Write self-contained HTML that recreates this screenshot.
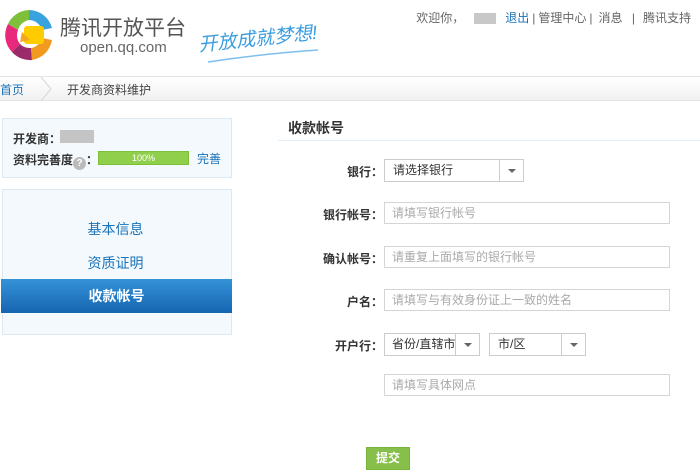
<!DOCTYPE html>
<html><head><meta charset="utf-8"><style>
*{margin:0;padding:0;box-sizing:border-box}
body{width:700px;height:475px;background:#fff;font-family:"Liberation Sans","Noto Sans CJK SC",sans-serif;font-size:12px;color:#333;position:relative;overflow:hidden}
.a{position:absolute}
.top{right:6px;top:9px;color:#666;font-size:12px;white-space:nowrap}
.top span{margin:0 3px}
.crumb{left:0;top:76px;width:700px;height:25px;background:linear-gradient(#fff,#f1f1f1);border-top:1px solid #e4e4e4;border-bottom:1px solid #e6e6e6}
.box{background:#f3f9fd;border:1px solid #dce9f3}
.lbl{width:100px;text-align:right;font-weight:bold;color:#333}
.inp{border:1px solid #d5d5d5;background:#fff;height:22px;color:#aaa;padding-left:7px;line-height:20px}
.sel{border:1px solid #ccc;background:#fff;height:23px;line-height:21px;padding-left:8px;color:#333}
.arr{position:absolute;right:0;top:0;width:24px;height:21px;border-left:1px solid #ccc}
.arr:after{content:"";position:absolute;left:8px;top:9px;border:4px solid transparent;border-top:4px solid #666}
.menu{left:0;width:231px;text-align:center;color:#1a73b8;font-size:14px}
</style></head><body>
<svg class="a" style="left:2px;top:6px" width="54" height="62" viewBox="0 0 54 62">
<path d="M27 4 A24 24 0 0 1 50 22 L40 24 A14 14 0 0 0 27 14Z" fill="#39a3e0"/>
<path d="M27 4 A24 24 0 0 0 6 18 L16 24 A14 14 0 0 1 27 14Z" fill="#7fc03a"/>
<path d="M6 18 A24 24 0 0 0 10 46 L18 38 A14 14 0 0 1 16 24Z" fill="#e8287a"/>
<path d="M10 46 A24 24 0 0 0 30 54 L29 42 A14 14 0 0 1 18 38Z" fill="#9b2a6a"/>
<path d="M30 54 A24 24 0 0 0 50 34 L40 32 A14 14 0 0 1 29 42Z" fill="#f29a1f"/>
<rect x="22" y="20" width="20" height="18" rx="3" fill="#ffcc00"/>
<path d="M20 26 L18 36 L28 34Z" fill="#f5a623"/>
</svg>
<div class="a" style="left:60px;top:17px;font-size:21px;line-height:24px;color:#555;letter-spacing:0px">腾讯开放平台</div>
<div class="a" style="left:80px;top:40px;font-size:15px;line-height:16px;color:#666">open.qq.com</div>
<div class="a" style="left:198px;top:24px;font-size:19px;color:#3b9de0;font-style:italic;transform:rotate(-6deg)">开放成就梦想!</div>
<svg class="a" style="left:200px;top:48px" width="120" height="16"><path d="M8 14 Q60 6 118 2" stroke="#7dbfee" stroke-width="1.5" fill="none"/></svg>
<div class="a top">欢迎你，<span style="display:inline-block;width:22px;height:11px;background:#c8c8c8;vertical-align:middle;margin:0 6px 0 10px"></span><span style="color:#1a73b8">退出</span>|<span>管理中心</span>|<span style="margin:0 6px">消息</span> |<span style="margin-left:8px">腾讯支持</span></div>
<div class="a crumb"></div>
<div class="a" style="left:0;top:81px;color:#1a73b8">首页</div>
<svg class="a" style="left:40px;top:77px" width="14" height="24"><path d="M1 0 L11 12 L1 24" stroke="#d5d5d5" fill="none"/></svg>
<div class="a" style="left:67px;top:81px;color:#444">开发商资料维护</div>

<div class="a box" style="left:2px;top:118px;width:230px;height:60px"></div>
<div class="a" style="left:13px;top:130px;font-weight:bold">开发商：</div>
<div class="a" style="left:60px;top:130px;width:34px;height:13px;background:#c4c4c4"></div>
<div class="a" style="left:13px;top:151px;font-weight:bold">资料完善度<span style="display:inline-block;width:13px;height:13px;border-radius:50%;background:#bbb;color:#fff;font-size:10px;text-align:center;line-height:13px;vertical-align:-2px">?</span>：</div>
<div class="a" style="left:98px;top:151px;width:91px;height:14px;border:1px solid #7cbf3a;background:#8fcf4c;color:#fff;font-size:9px;text-align:center;line-height:12px">100%</div>
<div class="a" style="left:197px;top:150px;color:#1a73b8">完善</div>

<div class="a box" style="left:2px;top:189px;width:230px;height:146px"></div>
<div class="a menu" style="top:219px">基本信息</div>
<div class="a menu" style="top:253px">资质证明</div>
<div class="a menu" style="top:279px;height:34px;line-height:34px;background:linear-gradient(#3592d8,#1566b0);color:#fff;font-weight:bold;left:1px;width:231px">收款帐号</div>

<div class="a" style="left:288px;top:118px;font-size:14px;font-weight:bold">收款帐号</div>
<div class="a" style="left:278px;top:140px;width:422px;height:1px;background:#e2eef8"></div>

<div class="a lbl" style="left:283px;top:163px">银行：</div>
<div class="a sel" style="left:384px;top:159px;width:140px">请选择银行<div class="arr"></div></div>
<div class="a lbl" style="left:283px;top:206px">银行帐号：</div>
<div class="a inp" style="left:384px;top:202px;width:286px">请填写银行帐号</div>
<div class="a lbl" style="left:283px;top:250px">确认帐号：</div>
<div class="a inp" style="left:384px;top:246px;width:286px">请重复上面填写的银行帐号</div>
<div class="a lbl" style="left:283px;top:293px">户名：</div>
<div class="a inp" style="left:384px;top:289px;width:286px">请填写与有效身份证上一致的姓名</div>
<div class="a lbl" style="left:283px;top:337px">开户行：</div>
<div class="a sel" style="left:384px;top:333px;width:96px;padding-left:7px">省份/直辖市<div class="arr"></div></div>
<div class="a sel" style="left:489px;top:333px;width:97px">市/区<div class="arr"></div></div>
<div class="a inp" style="left:384px;top:374px;width:286px">请填写具体网点</div>
<div class="a" style="left:366px;top:447px;width:44px;height:23px;background:#86c04a;border:1px solid #79b43e;color:#fff;font-weight:bold;text-align:center;line-height:21px">提交</div>
</body></html>
